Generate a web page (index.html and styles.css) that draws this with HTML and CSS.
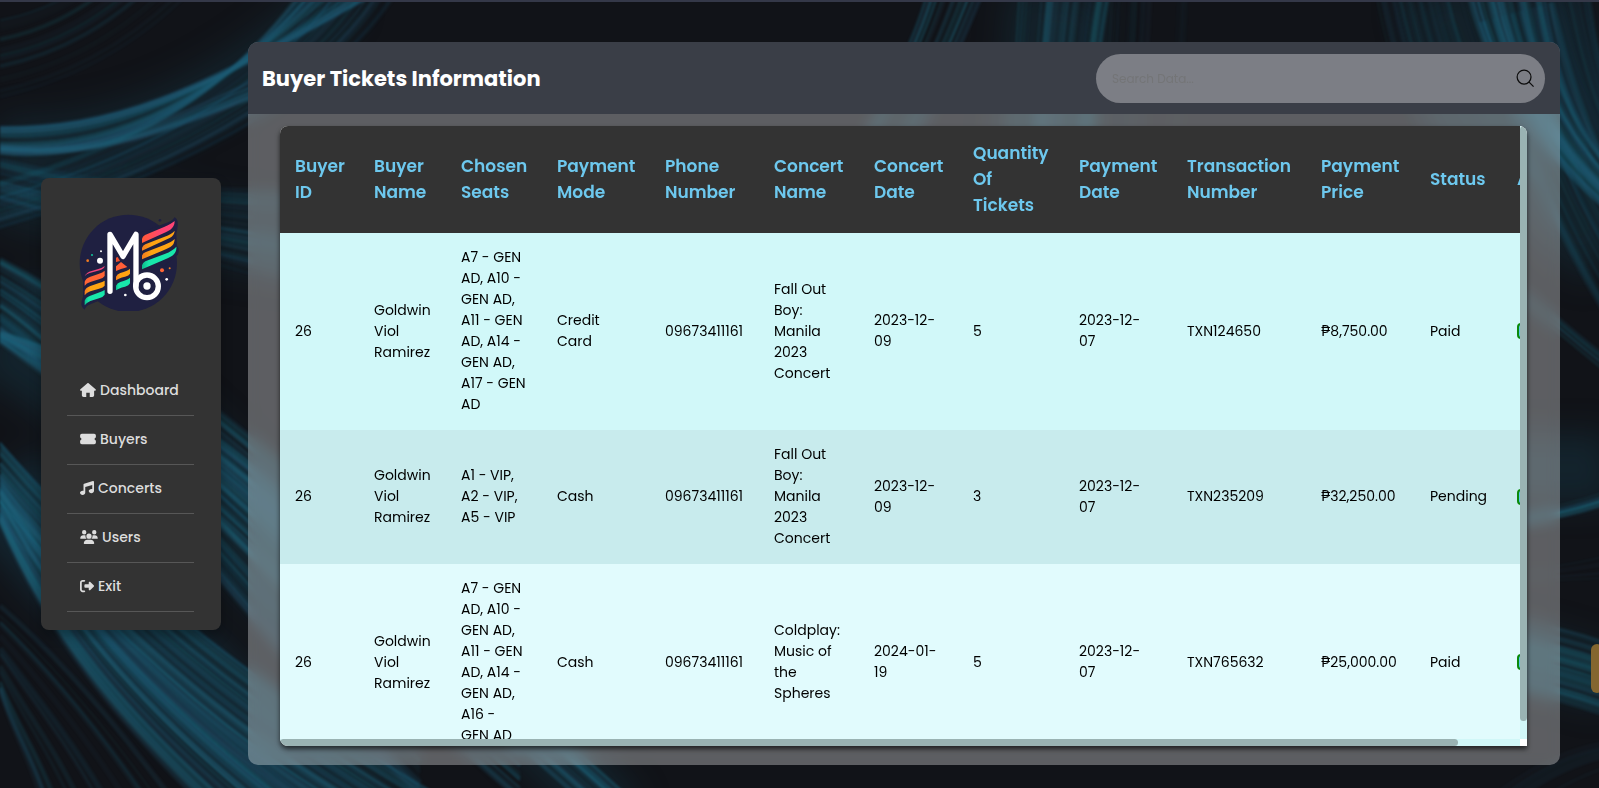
FILE: index.html
```html
<!DOCTYPE html>
<html lang="en">
<head>
<meta charset="utf-8">
<title>Buyer Tickets Information</title>
<link rel="stylesheet" href="styles.css">
</head>
<body>
<svg class="backdrop" viewBox="0 0 1599 788" preserveAspectRatio="none" aria-hidden="true"></svg>

<div class="page">
  <aside class="sidebar">
    <svg class="logo" viewBox="145 128 306 294" role="img" aria-label="Logo">
      <g fill="#1f2041">
        <circle cx="296" cy="279" r="146"/>
        <circle cx="391" cy="150" r="4"/>
        <path d="M330 188 L415 156 Q430 150 434 141 Q446 145 444 166 Q442 184 440 190 L442 226 Q452 238 444 254 L400 290z"/>
        <path d="M160 300 L230 280 L236 380 L182 402 Q168 408 165 418 Q152 410 156 392 Q162 380 160 370z"/>
      </g>
      <defs>
        <linearGradient id="pink"><stop offset="0" stop-color="#ff5a36"/><stop offset=".6" stop-color="#ff4474"/></linearGradient>
        <linearGradient id="amber"><stop offset="0" stop-color="#f47b20"/><stop offset=".3" stop-color="#ffa412"/></linearGradient>
        <linearGradient id="mint"><stop offset="0" stop-color="#0db98c"/><stop offset=".2" stop-color="#18e7ab"/></linearGradient>
      </defs>
      <path fill="url(#pink)" d="M337 218 V206 Q338 198 346 194 L405 169 Q426 160 435 152 Q435 168 422 178 Q412 184 398 190z"/>
      <path fill="url(#amber)" d="M337 241 V233 Q339 226 347 222 L405 199 Q426 191 435 181 Q434 196 420 203z"/>
      <path fill="url(#amber)" d="M337 267 V256 Q339 249 347 246 L405 223 Q426 215 435 206 Q435 222 422 230 Q410 236 398 241z"/>
      <path fill="url(#mint)" d="M337 297 V285 Q339 277 347 273 L405 251 Q430 241 440 229 Q442 245 428 256 Q418 262 400 270z"/>
      <path fill="#f0447c" d="M165 318 Q170 306 186 302 L206 296 Q218 293 225 287 Q224 296 210 300 L180 308 Q170 311 165 318z"/>
      <path fill="#ff6535" d="M165 346 V334 Q168 324 182 319 L206 311 Q220 306 225 301 V317 Q221 324 208 327 L182 335 Q170 339 165 346z"/>
      <path fill="url(#amber)" d="M165 375 V362 Q168 352 182 347 L206 339 Q220 335 225 331 V346 Q221 352 208 355 L182 363 Q170 367 165 375z"/>
      <path fill="url(#mint)" d="M165 405 V391 Q168 381 182 376 L206 367 Q220 362 225 359 V373 Q221 380 208 384 L182 392 Q170 397 165 405z"/>
      <path fill="#f2502f" d="M259 262 L264 260 L271 272 L259 275z"/>
      <path fill="#ff5f38" d="M259 302 V288 L274 275 L293 290 Q286 293 274 296z"/>
      <path fill="url(#amber)" d="M259 330 V319 Q262 311 272 308 Q293 302 301 295 V310 Q298 316 286 319 Q266 324 259 330z"/>
      <path fill="url(#mint)" d="M259 360 V346 Q262 338 272 335 Q293 329 301 322 V339 Q298 346 286 349 Q266 354 259 360z"/>
      <g fill="none" stroke="#fff" stroke-width="16" stroke-linejoin="round" stroke-linecap="round">
        <path d="M241 363 V192 L280 258 L319 192 V346"/>
        <circle cx="352" cy="348" r="34"/>
      </g>
      <g fill="#fff"><circle cx="352" cy="347" r="11"/><circle cx="211" cy="271" r="9"/><circle cx="214" cy="243" r="3"/><circle cx="287" cy="374" r="4"/><circle cx="411" cy="327" r="4"/></g>
      <circle cx="397" cy="300" r="6" fill="#ff6535"/><circle cx="420" cy="294" r="3" fill="#f47b20"/>
      <circle cx="174" cy="271" r="4" fill="#f47b20"/><circle cx="187" cy="254" r="3" fill="#0fc79c"/>
    </svg>
    <nav>
      <ul class="menu">
        <li><a href="#"><svg class="icon" viewBox="0 0 576 512"><path d="M575.8 255.5c0 18-15 32.1-32 32.1h-32l.7 160.2c.2 35.5-28.5 64.3-64 64.3H352V352H224v160H128.1c-35.300 0-64-28.700-64-64V287.600H32c-18 0-32-14-32-32.100 0-9 3-17 10-24L266.400 8c7-7 15-8 22-8s15 2 21 7l255.400 224.500c8 7 12 15 11 24z"/></svg>Dashboard</a></li>
        <li><a href="#"><svg class="icon" viewBox="0 0 576 512"><path d="M64 64C28.7 64 0 92.7 0 128v64c0 8.8 7.4 15.7 15.7 18.6C34.5 217.1 48 235 48 256s-13.5 38.9-32.3 45.4C7.4 304.300 0 311.200 0 320v64c0 35.300 28.700 64 64 64H512c35.300 0 64-28.700 64-64V320c0-8.800-7.400-15.700-15.700-18.600C541.500 294.900 528 277 528 256s13.500-38.900 32.300-45.400c8.300-2.900 15.700-9.800 15.700-18.600V128c0-35.300-28.700-64-64-64H64z"/></svg>Buyers</a></li>
        <li><a href="#"><svg class="icon icon-square" viewBox="0 0 512 512"><path d="M499.1 6.3c8.1 6 12.9 15.600 12.900 25.700v72V368c0 44.200-43 80-96 80s-96-35.800-96-80s43-80 96-80c11.200 0 22 1.600 32 4.600V147L192 223.800V432c0 44.200-43 80-96 80s-96-35.800-96-80s43-80 96-80c11.200 0 22 1.600 32 4.600V200 128c0-14.100 9.300-26.600 22.800-30.700l320-96c9.700-2.900 20.200-1.100 28.300 5z"/></svg>Concerts</a></li>
        <li><a href="#"><svg class="icon icon-wide" viewBox="0 0 640 512"><path d="M144 0a80 80 0 1 1 0 160A80 80 0 1 1 144 0zM512 0a80 80 0 1 1 0 160A80 80 0 1 1 512 0zM0 298.700C0 239.800 47.800 192 106.700 192h42.700c15.900 0 31 3.500 44.600 9.700c-1.300 7.200-1.900 14.700-1.900 22.300c0 38.200 16.800 72.500 43.300 96H21.300C9.600 320 0 310.400 0 298.700zM405.300 320h-.7c26.600-23.500 43.300-57.800 43.300-96c0-7.600-.7-15-1.900-22.300c13.600-6.300 28.700-9.700 44.600-9.700h42.700C592.200 192 640 239.800 640 298.700c0 11.800-9.600 21.300-21.300 21.300H405.300zM224 224a96 96 0 1 1 192 0 96 96 0 1 1-192 0zM128 485.300C128 411.700 187.700 352 261.300 352H378.700C452.300 352 512 411.700 512 485.300c0 14.700-11.900 26.700-26.700 26.700H154.700c-14.700 0-26.700-11.900-26.700-26.700z"/></svg>Users</a></li>
        <li><a href="#"><svg class="icon icon-square" viewBox="0 0 512 512"><path d="M377.900 105.900L500.700 228.700c7.200 7.200 11.300 17.100 11.300 27.300s-4.100 20.100-11.300 27.300L377.900 406.100c-6.400 6.400-15 9.900-24 9.900c-18.700 0-33.900-15.200-33.900-33.900l0-62.100-128 0c-17.700 0-32-14.300-32-32l0-64c0-17.700 14.300-32 32-32l128 0 0-62.100c0-18.700 15.200-33.900 33.900-33.900c9 0 17.600 3.600 24 9.900zM160 96L96 96c-17.700 0-32 14.300-32 32l0 256c0 17.700 14.300 32 32 32l64 0c17.700 0 32 14.300 32 32s-14.300 32-32 32l-64 0c-53 0-96-43-96-96L0 128C0 75 43 32 96 32l64 0c17.700 0 32 14.300 32 32s-14.300 32-32 32z"/></svg>Exit</a></li>
      </ul>
    </nav>
  </aside>

  <main class="panel">
    <header class="panel-header">
      <h1>Buyer Tickets Information</h1>
      <form class="search">
        <input type="search" placeholder="Search Data..." aria-label="Search data">
        <button type="submit" aria-label="Search">
          <svg viewBox="0 0 20 20"><circle cx="8.500" cy="8.500" r="7.300"/><path d="M13.500 13.500 L18.500 18.500"/></svg>
        </button>
      </form>
    </header>

    <section class="panel-body">
      <div class="table-frame">
        <div class="table-scroll">
          <table>
            <colgroup>
              <col class="c-id"><col class="c-buyer"><col class="c-seats"><col class="c-mode"><col class="c-phone"><col class="c-concert"><col class="c-date"><col class="c-qty"><col class="c-paydate"><col class="c-txn"><col class="c-price"><col class="c-status"><col class="c-action">
            </colgroup>
            <thead>
              <tr><th>Buyer<br>ID</th><th>Buyer<br>Name</th><th>Chosen<br>Seats</th><th>Payment<br>Mode</th><th>Phone<br>Number</th><th>Concert<br>Name</th><th>Concert<br>Date</th><th>Quantity<br>Of<br>Tickets</th><th>Payment<br>Date</th><th>Transaction<br>Number</th><th>Payment<br>Price</th><th>Status</th><th>Action</th></tr>
            </thead>
            <tbody>
              <tr><td>26</td><td>Goldwin<br>Viol<br>Ramirez</td><td>A7 - GEN<br>AD, A10 -<br>GEN AD,<br>A11 - GEN<br>AD, A14 -<br>GEN AD,<br>A17 - GEN<br>AD</td><td>Credit<br>Card</td><td>09673411161</td><td>Fall Out<br>Boy:<br>Manila<br>2023<br>Concert</td><td>2023-12-<br>09</td><td>5</td><td>2023-12-<br>07</td><td>TXN124650</td><td>₱8,750.00</td><td>Paid</td><td><button class="action" type="button" aria-label="Update ticket"></button></td></tr>
              <tr><td>26</td><td>Goldwin<br>Viol<br>Ramirez</td><td>A1 - VIP,<br>A2 - VIP,<br>A5 - VIP</td><td>Cash</td><td>09673411161</td><td>Fall Out<br>Boy:<br>Manila<br>2023<br>Concert</td><td>2023-12-<br>09</td><td>3</td><td>2023-12-<br>07</td><td>TXN235209</td><td>₱32,250.00</td><td>Pending</td><td><button class="action" type="button" aria-label="Update ticket"></button></td></tr>
              <tr class="hovered"><td>26</td><td>Goldwin<br>Viol<br>Ramirez</td><td>A7 - GEN<br>AD, A10 -<br>GEN AD,<br>A11 - GEN<br>AD, A14 -<br>GEN AD,<br>A16 -<br>GEN AD</td><td>Cash</td><td>09673411161</td><td>Coldplay:<br>Music of<br>the<br>Spheres</td><td>2024-01-<br>19</td><td>5</td><td>2023-12-<br>07</td><td>TXN765632</td><td>₱25,000.00</td><td>Paid</td><td><button class="action" type="button" aria-label="Update ticket"></button></td></tr>
            </tbody>
          </table>
        </div>
        <div class="bar bar-v"><div class="thumb"></div></div>
        <div class="bar bar-h"><div class="thumb"></div></div>
      </div>
    </section>
  </main>
</div>
<button class="side-tab" type="button" aria-label="Open side panel"></button>
<script src="backdrop.js"></script>
</body>
</html>
```
FILE: styles.css
```css
* { box-sizing: border-box; }

body {
  margin: 0;
  height: 100vh;
  overflow: hidden;
  border-top: 2px solid #343848;
  background: #111318;
  color: #000;
  font-family: Poppins, Inter, "Open Sans", sans-serif;
}

.backdrop {
  position: absolute;
  inset: 2px 0 0;
  width: 100%;
  height: 100%;
  z-index: -1;
}

.page {
  display: flex;
  align-items: center;
  gap: 27px;
  height: 100%;
  padding: 40px 39px 23px 41px;
}

/* Sidebar */
.sidebar {
  flex: 0 0 180px;
  padding: 35px 27px 18px 26px;
  border-radius: 8px;
  background: #333;
  box-shadow: 0 6px 12px rgba(0, 0, 0, .3);
}

.logo {
  display: block;
  width: 102px;
  height: 98px;
  margin: 0 0 56px 11px;
}

.menu {
  margin: 0;
  padding: 0;
  list-style: none;
}

.menu li { border-bottom: 1px solid #575757; }

.menu a {
  display: flex;
  align-items: center;
  gap: 4px;
  padding: 12px 0 14px 13px;
  color: #ddd;
  font-size: 14px;
  font-weight: 500;
  line-height: 22px;
  text-decoration: none;
}

.icon {
  width: 16px;
  height: 14px;
  fill: #ddd;
}

.icon-square { width: 14px; }
.icon-wide { width: 18px; }

/* Main panel */
.panel {
  flex: 1;
  min-width: 0;
  align-self: stretch;
  display: flex;
  flex-direction: column;
  overflow: hidden;
  border-radius: 10px;
  background: rgba(255, 255, 255, .32);
  backdrop-filter: blur(7px);
}

.panel-header {
  display: flex;
  align-items: center;
  justify-content: space-between;
  padding: 12px 15px 11px 14px;
  background: #3a3e47;
}

h1 {
  margin: 0;
  color: #fff;
  font-size: 21px;
  font-weight: 700;
  line-height: 32px;
}

.search {
  display: flex;
  align-items: center;
  width: 35%;
  height: 49px;
  padding: 0 10px 0 16px;
  border-radius: 25px;
  background: #7c7e85;
}

.search input {
  flex: 1;
  min-width: 0;
  padding: 0;
  border: 0;
  outline: 0;
  background: none;
  color: #222;
  font: 12px/18px Poppins, Inter, sans-serif;
}

.search input::placeholder { color: #747577; }

.search button {
  display: flex;
  padding: 0;
  border: 0;
  background: none;
}

.search svg {
  width: 19px;
  height: 19px;
  fill: none;
  stroke: #0c0c0c;
  stroke-width: 1.3;
}

.panel-body {
  flex: 1;
  min-height: 0;
  display: flex;
  padding: 12px 33px 19px 32px;
}

.table-frame {
  flex: 1;
  min-width: 0;
  display: grid;
  grid-template: minmax(0, 1fr) 7px / minmax(0, 1fr) 7px;
  overflow: hidden;
  border-radius: 8px 8px 0 8px;
  background: #fff;
  box-shadow: 0 3px 5px rgba(0, 0, 0, .65);
}

.table-scroll {
  overflow: auto;
  scrollbar-width: none;
}

.bar { background: #d1f7f8; }
.bar-h { grid-row: 2; }
.thumb { border-radius: 4px; background: #9ab3b3; }
.bar-v .thumb { height: 97%; }
.bar-h .thumb { width: 95%; height: 7px; }

/* Tickets table */
table {
  width: 1309px;
  min-width: 100%;
  border-collapse: collapse;
  table-layout: fixed;
}

.c-id { width: 79px; }
.c-buyer { width: 87px; }
.c-seats { width: 96px; }
.c-mode { width: 108px; }
.c-phone { width: 109px; }
.c-concert { width: 100px; }
.c-date { width: 99px; }
.c-qty { width: 106px; }
.c-paydate { width: 108px; }
.c-txn { width: 134px; }
.c-price { width: 109px; }
.c-status { width: 87px; }

th, td {
  padding: 14px 0 15px 15px;
  text-align: left;
  vertical-align: middle;
  white-space: nowrap;
}

th {
  background: #333;
  color: #6dc8ee;
  font-size: 17px;
  font-weight: 600;
  line-height: 26px;
}

td {
  font-size: 14px;
  font-weight: 400;
  line-height: 21px;
}

tbody tr { background: #d1f8f9; }
tbody tr:nth-child(even) { background: #c8ebed; }
tbody tr.hovered { background: #e1fbfd; }

.action {
  display: block;
  width: 48px;
  height: 16px;
  border: 2px solid #0a8a0a;
  border-radius: 4px;
  background: #5cc5ea;
}

.side-tab {
  position: absolute;
  right: -4px;
  top: 644px;
  width: 10px;
  height: 49px;
  border: 0;
  border-radius: 6px;
  background: #84662f;
}
```
FILE: backdrop.js
```js
// Light streaks: each bundle blends from one cubic curve to another.
const bundles = [
  { a: [0, 95, 90, 75, 150, 30, 190, -10], b: [0, 15, 30, 10, 50, 0, 70, -10], n: 20, o: 0.16 },
  { a: [0, 125, 110, 125, 190, 95, 380, -10], b: [0, 152, 130, 165, 230, 85, 300, -10], n: 50, o: 0.24 },
  { a: [0, 143, 90, 152, 140, 130, 260, 75], b: [0, 149, 90, 156, 140, 140, 260, 95], n: 10, o: 0.35 },
  { a: [0, 155, 120, 185, 200, 190, 420, 180], b: [0, 205, 120, 240, 200, 260, 420, 330], n: 40, o: 0.2 },
  { a: [0, 255, 110, 310, 180, 380, 420, 560], b: [0, 330, 110, 420, 180, 560, 420, 800], n: 70, o: 0.2 },
  { a: [0, 330, 180, 385, 240, 440, 520, 700], b: [0, 340, 180, 470, 240, 560, 520, 800], n: 60, o: 0.26 },
  { a: [0, 470, 80, 580, 160, 680, 330, 800], b: [0, 520, 50, 640, 120, 720, 200, 800], n: 80, o: 0.24 },
  { a: [0, 440, 120, 580, 280, 700, 450, 800], b: [0, 520, 100, 640, 200, 740, 300, 800], n: 60, o: 0.26 },
  { a: [0, 600, 60, 650, 120, 720, 180, 800], b: [0, 690, 10, 730, 30, 760, 40, 800], n: 24, o: 0.16 },
  { a: [300, 540, 420, 660, 500, 730, 580, 800], b: [300, 500, 460, 640, 560, 730, 640, 800], n: 30, o: 0.32 },
  { a: [300, -10, 260, 50, 150, 140, -10, 180], b: [400, -10, 350, 70, 230, 160, -10, 230], n: 40, o: 0.16 },
  { a: [925, -10, 915, 30, 890, 80, 850, 160], b: [985, -10, 965, 40, 940, 90, 910, 160], n: 30, o: 0.3 },
  { a: [1010, -10, 1008, 40, 1005, 90, 1000, 160], b: [1110, -10, 1100, 40, 1095, 90, 1090, 160], n: 34, o: 0.24 },
  { a: [1110, -10, 1108, 40, 1105, 90, 1100, 160], b: [1190, -10, 1188, 40, 1185, 90, 1180, 160], n: 12, o: 0.1 },
  { a: [1370, -10, 1380, 40, 1390, 90, 1430, 170], b: [1460, -10, 1475, 60, 1500, 110, 1560, 180], n: 30, o: 0.14 },
  { a: [1460, -10, 1480, 70, 1530, 150, 1610, 215], b: [1550, -10, 1560, 70, 1580, 120, 1610, 160], n: 60, o: 0.3 },
  { a: [1480, 20, 1520, 150, 1560, 240, 1610, 320], b: [1590, -10, 1595, 30, 1600, 60, 1610, 90], n: 50, o: 0.14 },
  { a: [1480, 260, 1540, 290, 1570, 330, 1610, 355], b: [1480, 290, 1540, 310, 1570, 345, 1610, 375], n: 10, o: 0.18 },
  { a: [1400, 515, 1500, 520, 1560, 506, 1610, 488], b: [1400, 530, 1500, 532, 1560, 522, 1610, 505], n: 14, o: 0.3 },
  { a: [1400, 570, 1500, 572, 1560, 565, 1610, 550], b: [1400, 578, 1500, 582, 1560, 580, 1610, 578], n: 4, o: 0.2 },
  { a: [1400, 600, 1500, 610, 1560, 622, 1610, 640], b: [1400, 680, 1500, 680, 1560, 698, 1610, 716], n: 50, o: 0.22 },
  { a: [1500, 788, 1540, 760, 1570, 745, 1610, 740], b: [1540, 798, 1560, 785, 1590, 770, 1610, 765], n: 6, o: 0.12 }
];

// Soft glow behind the streaks: curve, width, opacity.
const glows = [
  ["M0 140C110 145 230 100 340 -10", 50, 0.3],
  ["M0 190C120 215 200 230 420 260", 70, 0.25],
  ["M0 320C110 380 200 480 420 690", 110, 0.35],
  ["M0 480C100 600 220 720 360 830", 100, 0.4],
  ["M340 560C460 660 540 730 620 820", 60, 0.35],
  ["M1060 -10L1045 160", 100, 0.3],
  ["M1440 -10C1460 80 1520 180 1610 250", 80, 0.3],
  ["M1540 -10C1550 60 1580 110 1610 150", 70, 0.4],
  ["M1400 460C1500 465 1560 470 1610 465", 70, 0.35],
  ["M1400 640C1500 645 1560 660 1610 680", 60, 0.3]
];

let seed = 17;
const random = () => (seed = (seed * 16807) % 2147483647) / 2147483647;
const colours = ["#1f6880", "#205c76", "#1c7688", "#28526c"];
const svg = document.querySelector(".backdrop");
const ns = "http://www.w3.org/2000/svg";

function draw(parent, d, colour, width, opacity) {
  const path = document.createElementNS(ns, "path");
  path.setAttribute("d", d);
  path.setAttribute("fill", "none");
  path.setAttribute("stroke", colour);
  path.setAttribute("stroke-width", width);
  path.setAttribute("stroke-opacity", opacity);
  parent.append(path);
}

const haze = document.createElementNS(ns, "g");
haze.style.filter = "blur(16px)";
svg.append(haze);
for (const [d, width, opacity] of glows) draw(haze, d, "#174254", width, opacity);

const streaks = document.createElementNS(ns, "g");
streaks.style.filter = "blur(1px)";
svg.append(streaks);
for (const { a, b, n, o } of bundles) {
  for (let i = 0; i < n; i++) {
    const t = random();
    const p = a.map((v, k) => (v + (b[k] - v) * t).toFixed(1));
    const d = `M${p[0]} ${p[1]}C${p.slice(2).join(" ")}`;
    const width = (1 + random() * random() * 7).toFixed(1);
    draw(streaks, d, colours[Math.floor(random() * 4)], width, (o * (0.3 + random() * 0.7)).toFixed(2));
  }
}
```
